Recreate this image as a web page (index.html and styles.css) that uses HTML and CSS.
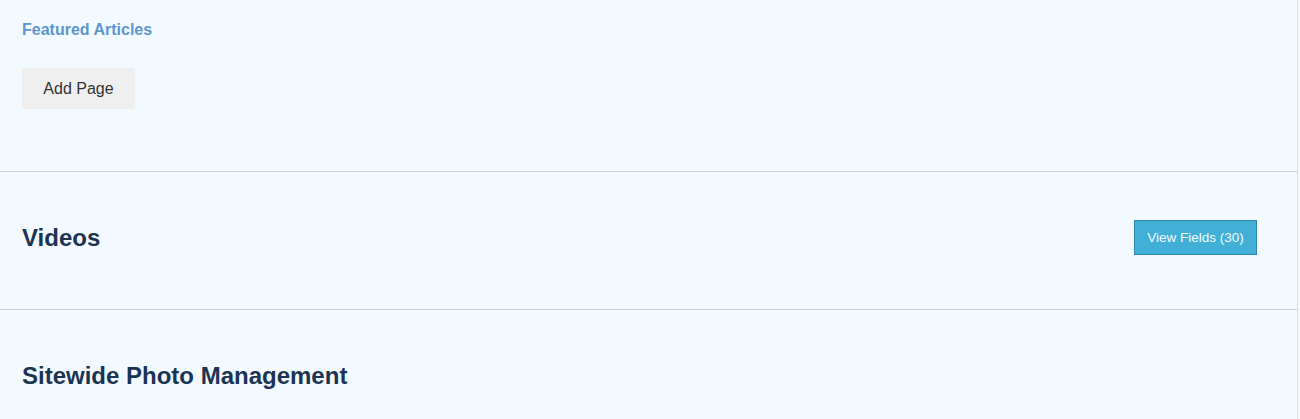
FILE: index.html
```html
<!DOCTYPE html>
<html>
<head>
<meta charset="utf-8">
<link rel="stylesheet" href="styles.css">
</head>
<body>
<div class="panel">
  <section class="section section-featured">
    <a class="featured-link" href="#">Featured Articles</a>
    <div class="actions">
      <button class="btn-add">Add Page</button>
    </div>
  </section>
  <section class="section section-row">
    <h2 class="section-title">Videos</h2>
    <button class="btn-fields">View Fields (30)</button>
  </section>
  <section class="section section-last">
    <h2 class="section-title">Sitewide Photo Management</h2>
  </section>
</div>
</body>
</html>
```
FILE: styles.css
```css
html, body {
  margin: 0;
  padding: 0;
}
body {
  background: #f4f5f6;
  font-family: "Liberation Sans", Arial, Helvetica, sans-serif;
  width: 1300px;
  height: 419px;
  overflow: hidden;
}
.panel {
  width: 1297px;
  height: 419px;
  background: #f3faff;
  border-right: 1px solid #dfe3e6;
  box-sizing: content-box;
}
.section {
  border-bottom: 1px solid #c5d2dc;
  padding: 0 22px;
  box-sizing: border-box;
}
.section-featured {
  height: 172px;
  padding-top: 20px;
}
.featured-link {
  display: block;
  color: #5e95cf;
  font-size: 16px;
  font-weight: bold;
  text-decoration: none;
  line-height: 20px;
}
.actions {
  margin-top: 28px;
}
.btn-add {
  width: 113px;
  height: 41px;
  background: #efefef;
  border: none;
  border-radius: 2px;
  color: #333;
  font-family: "Liberation Sans", Arial, sans-serif;
  font-size: 16px;
  padding: 0;
}
.section-row {
  height: 138px;
  display: flex;
  align-items: center;
  justify-content: space-between;
  padding-top: 48px;
  padding-bottom: 54px;
  padding-right: 40px;
}
.section-title {
  margin: 0;
  color: #1b3453;
  font-size: 24px;
  font-weight: bold;
  line-height: 28px;
}
.btn-fields {
  width: 123px;
  height: 35px;
  background: #41afd6;
  border: 1px solid #2c87a9;
  color: #f2fafd;
  font-family: "Liberation Sans", Arial, sans-serif;
  font-size: 13.5px;
  padding: 0;
}
.section-last {
  border-bottom: none;
  padding-top: 52px;
}
```
